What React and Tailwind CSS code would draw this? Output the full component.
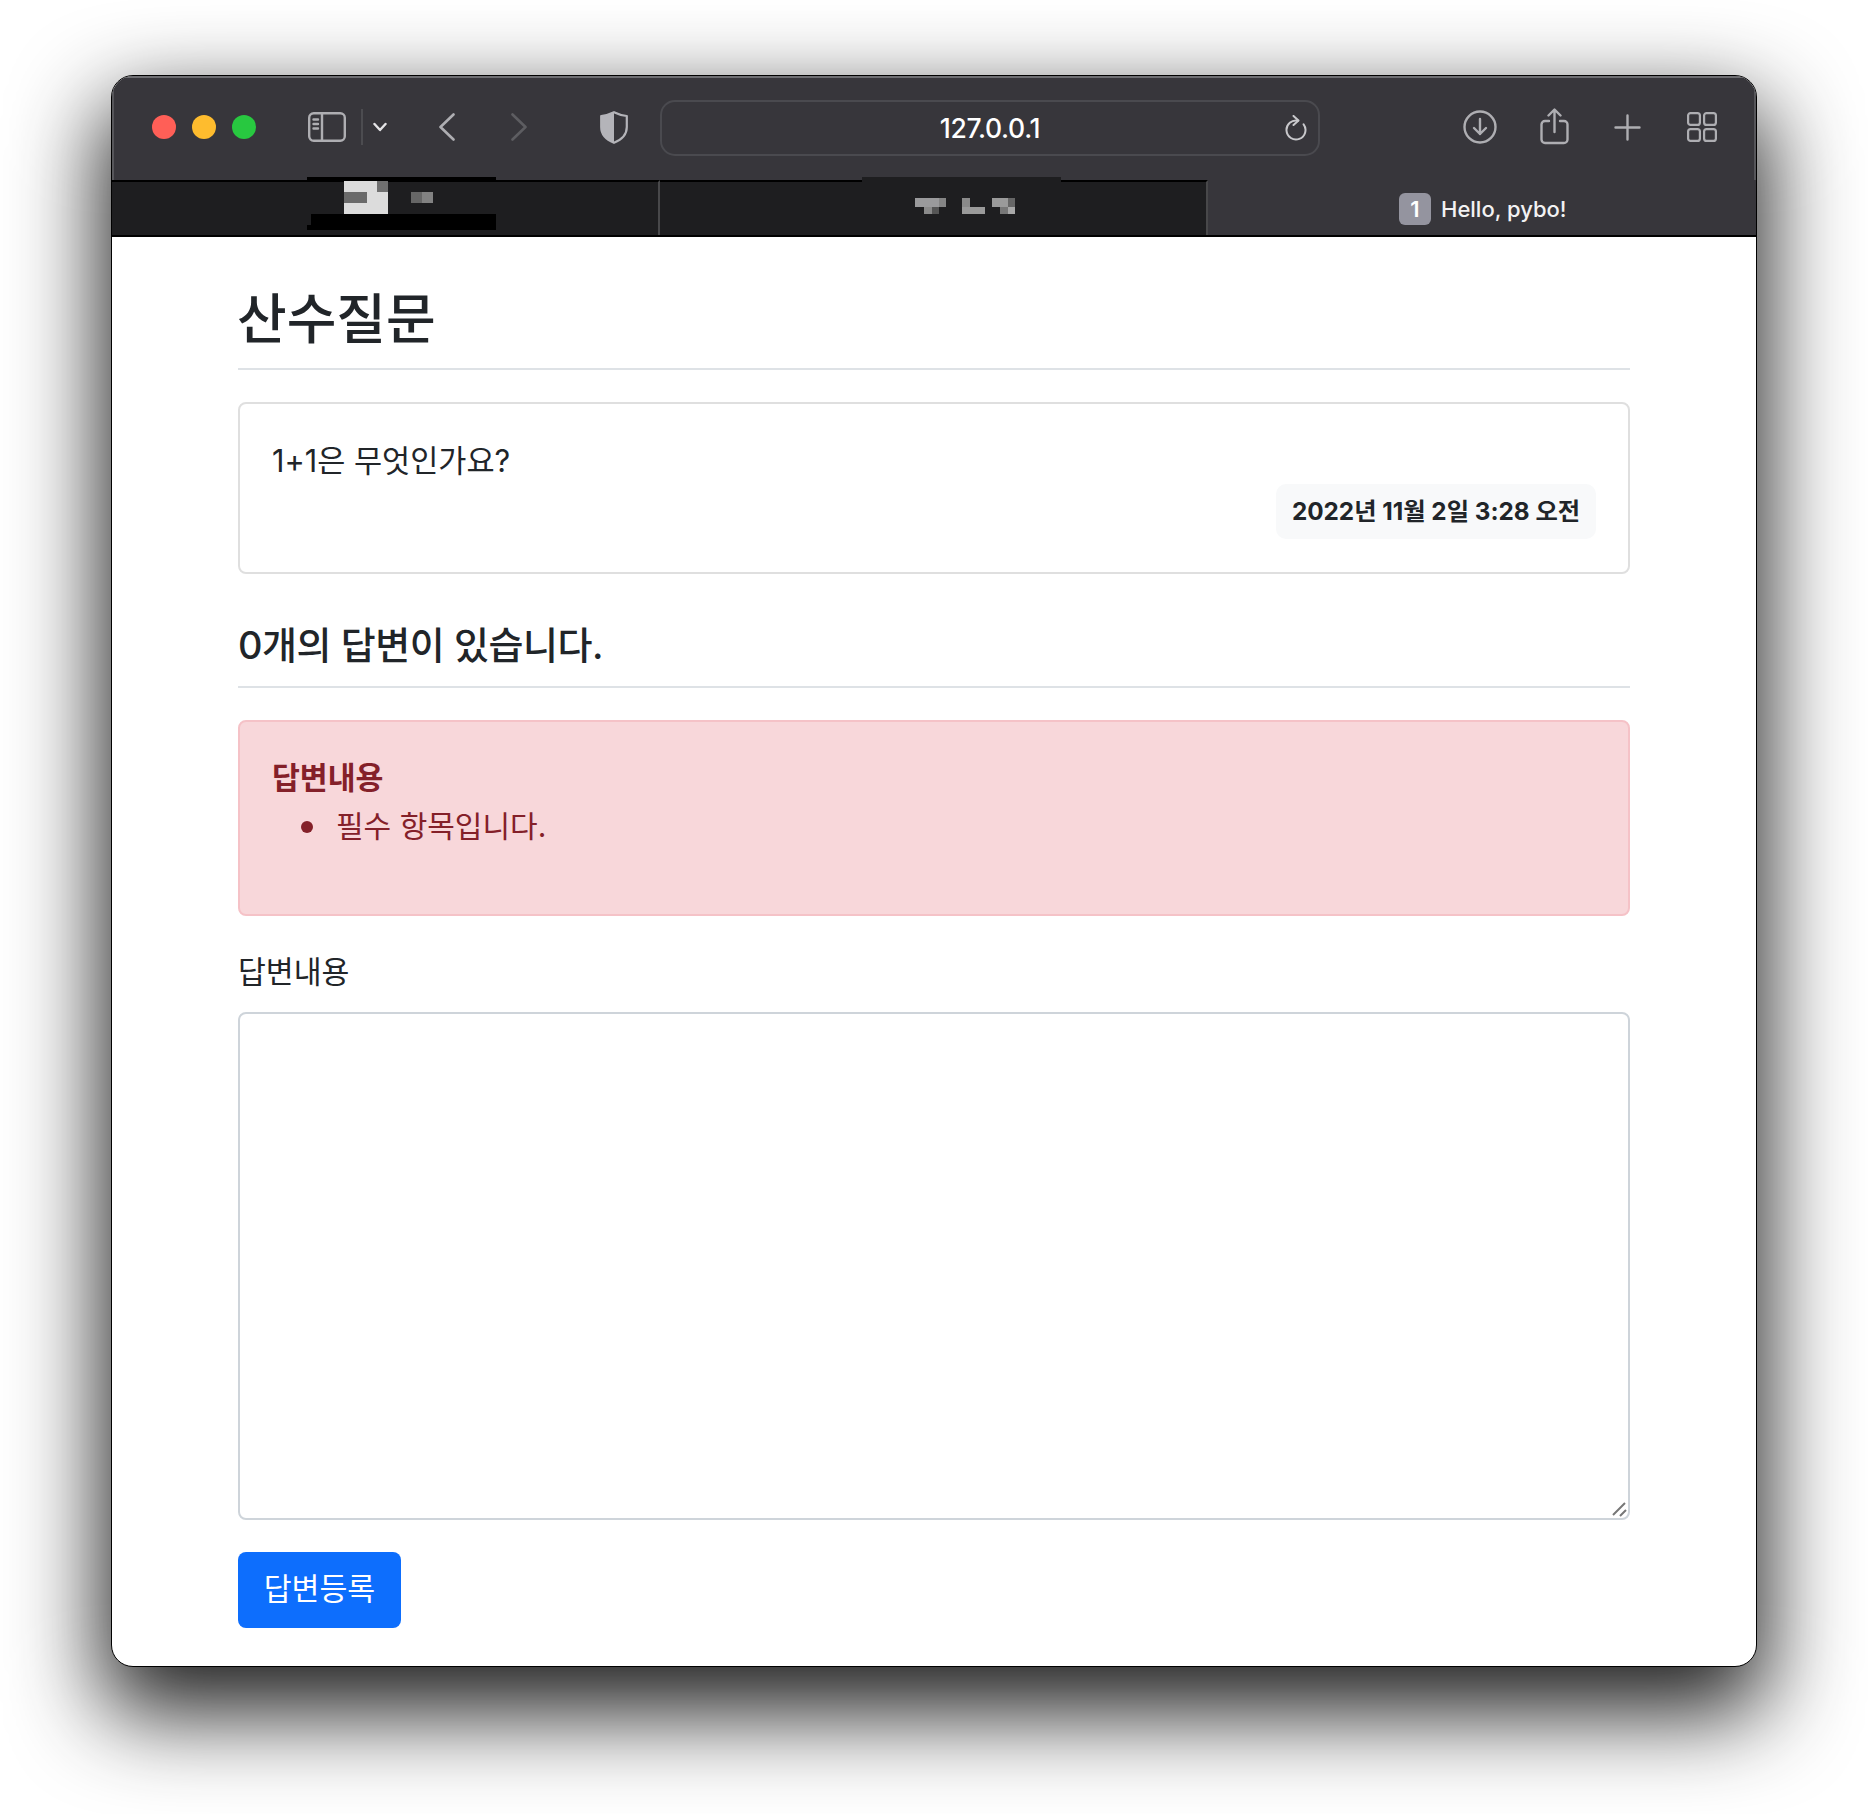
import React from "react";

function Mosaic1() {
  return (
    <svg width="190" height="53" viewBox="0 0 190 53" className="absolute left-[195px] top-[-5px]" shapeRendering="crispEdges">
      <rect x="0" y="0" width="189" height="4" fill="#000" />
      <rect x="37" y="4" width="44" height="33" fill="#dcdcdc" />
      <rect x="70" y="4" width="11" height="11" fill="#707070" />
      <rect x="37" y="15" width="23" height="11" fill="#6a6a6a" />
      <rect x="104" y="15" width="11" height="11" fill="#666666" />
      <rect x="115" y="15" width="11" height="11" fill="#828282" />
      <rect x="4" y="37" width="185" height="16" fill="#000" />
      <rect x="0" y="48" width="4" height="5" fill="#000" />
    </svg>
  );
}

function Mosaic2() {
  return (
    <svg width="200" height="40" viewBox="0 0 200 40" className="absolute left-[202px] top-[-5px]" shapeRendering="crispEdges">
      <rect x="0" y="0" width="199" height="5" fill="#1e1e20" />
      <rect x="53" y="21" width="24" height="9" fill="#9a9a9c" />
      <rect x="77" y="21" width="7" height="9" fill="#858585" />
      <rect x="62" y="30" width="8" height="7" fill="#8a8a8a" />
      <rect x="70" y="30" width="7" height="7" fill="#555555" />
      <rect x="100" y="21" width="8" height="9" fill="#8a8a8a" />
      <rect x="100" y="30" width="23" height="7" fill="#9a9a9a" />
      <rect x="130" y="21" width="16" height="9" fill="#9a9a9a" />
      <rect x="146" y="21" width="7" height="9" fill="#666666" />
      <rect x="138" y="30" width="8" height="7" fill="#777777" />
      <rect x="146" y="30" width="7" height="7" fill="#a8a8a8" />
    </svg>
  );
}

function Toolbar() {
  return (
    <div className="flex h-[104px] items-center bg-[#37363b] pb-[2px] pl-[40px] shadow-[inset_0_2px_0_#6e6e72,inset_2px_0_0_#56565a,inset_-2px_0_0_#56565a]">
      <span className="h-[24px] w-[24px] rounded-full bg-[#ff5f57]" />
      <span className="ml-[16px] h-[24px] w-[24px] rounded-full bg-[#febc2e]" />
      <span className="ml-[16px] h-[24px] w-[24px] rounded-full bg-[#28c840]" />

      <svg className="ml-[52px]" width="38" height="30" viewBox="0 0 38 30" fill="none" stroke="#aeaeb2" strokeWidth="2.4">
        <rect x="1.2" y="1.2" width="35.6" height="27.6" rx="4.5" />
        <path d="M14 1.2v27.6" />
        <path d="M5.5 7.5h4.5M5.5 12h4.5M5.5 16.5h4.5" strokeLinecap="round" />
      </svg>
      <span className="ml-[15px] h-[36px] w-[2px] bg-[#4c4c50]" />
      <svg className="ml-[10px]" width="14" height="10" viewBox="0 0 14 10" fill="none" stroke="#e4e4e6" strokeWidth="2.4" strokeLinecap="round" strokeLinejoin="round">
        <path d="M1.5 2L7 8l5.5-6" />
      </svg>
      <svg className="ml-[52px]" width="16" height="28" viewBox="0 0 16 28" fill="none" stroke="#aeaeb2" strokeWidth="2.6" strokeLinecap="round" strokeLinejoin="round">
        <path d="M14.5 1.5L1.5 14l13 12.5" />
      </svg>
      <svg className="ml-[56px]" width="16" height="28" viewBox="0 0 16 28" fill="none" stroke="#5d5d61" strokeWidth="2.6" strokeLinecap="round" strokeLinejoin="round">
        <path d="M1.5 1.5L14.5 14l-13 12.5" />
      </svg>
      <svg className="ml-[73px]" width="28" height="33" viewBox="0 0 28 33" fill="none">
        <path d="M14 1.2C10 3.2 6 4.4 1.2 5v11c0 8 5.4 12.8 12.8 15.8C21.4 28.8 26.8 24 26.8 16V5C22 4.4 18 3.2 14 1.2z" stroke="#b4b4b9" strokeWidth="2.2" strokeLinejoin="round" />
        <path d="M14 1.2C10 3.2 6 4.4 1.2 5v11c0 8 5.4 12.8 12.8 15.8z" fill="#b4b4b9" />
      </svg>

      <div className="relative ml-[32px] mt-[2px] flex h-[56px] w-[660px] items-center justify-center rounded-[15px] border-2 border-[#4a4a4f] pt-[2px] text-[26.5px] font-medium tracking-[-0.3px] text-white">
        127.0.0.1
        <svg className="absolute right-[11px] top-[13px]" width="22" height="26" viewBox="0 0 22 26" fill="none" stroke="#c8c8cb" strokeWidth="2" strokeLinecap="round" strokeLinejoin="round">
          <path d="M13 5.7a9.5 9.5 0 1 0 5.6 3.6" />
          <path d="M8.5 1L13.5 5.5 8.5 10" />
        </svg>
      </div>

      <svg className="ml-[143px]" width="34" height="34" viewBox="0 0 34 34" fill="none" stroke="#aeaeb2" strokeWidth="2.4" strokeLinecap="round" strokeLinejoin="round">
        <circle cx="17" cy="17" r="15.5" />
        <path d="M17 9v15M11 18l6 6 6-6" />
      </svg>
      <svg className="ml-[43px] mt-[-2px]" width="29" height="37" viewBox="0 0 29 37" fill="none" stroke="#aeaeb2" strokeWidth="2.4" strokeLinecap="round" strokeLinejoin="round">
        <path d="M9 13H5a3.5 3.5 0 0 0-3.5 3.5v15A3.5 3.5 0 0 0 5 35h19a3.5 3.5 0 0 0 3.5-3.5v-15A3.5 3.5 0 0 0 24 13h-4" />
        <path d="M14.5 24V2M8.5 7.5l6-6 6 6" />
      </svg>
      <svg className="ml-[45px]" width="27" height="27" viewBox="0 0 27 27" fill="none" stroke="#aeaeb2" strokeWidth="2.4" strokeLinecap="round">
        <path d="M13.5 1.5v24M1.5 13.5h24" />
      </svg>
      <svg className="ml-[46px]" width="30" height="30" viewBox="0 0 30 30" fill="none" stroke="#aeaeb2" strokeWidth="2.2">
        <rect x="1.1" y="1.1" width="11.8" height="11.8" rx="2.5" />
        <rect x="17.1" y="1.1" width="11.8" height="11.8" rx="2.5" />
        <rect x="1.1" y="17.1" width="11.8" height="11.8" rx="2.5" />
        <rect x="17.1" y="17.1" width="11.8" height="11.8" rx="2.5" />
      </svg>
    </div>
  );
}

function TabBar() {
  return (
    <div className="flex h-[57px] border-b-2 border-black">
      <div className="relative w-[548px] border-t-2 border-r-2 border-black border-r-[#48484a] bg-[#1e1e20]">
        <Mosaic1 />
      </div>
      <div className="relative w-[548px] border-t-2 border-r-2 border-black border-r-[#48484a] bg-[#1e1e20]">
        <Mosaic2 />
      </div>
      <div className="flex flex-1 items-center bg-[#37363b] pl-[191px] pt-[3px]">
        <span className="flex h-[32px] w-[32px] items-center justify-center rounded-[6px] bg-[#94949f] text-[22px] font-semibold text-white">1</span>
        <span className="ml-[10px] text-[22px] font-medium text-[#f2f2f3]">Hello, pybo!</span>
      </div>
    </div>
  );
}

export default function App() {
  return (
    <div lang="ko" className="h-[1814px] w-[1868px] overflow-hidden bg-white pl-[111px] pt-[75px] font-['Inter','Noto_Sans_CJK_KR',sans-serif]">
      <div className="h-[1592px] w-[1646px] overflow-hidden rounded-[22px] border border-black bg-white shadow-[0_38px_90px_8px_rgba(0,0,0,0.88)]">
        <Toolbar />
        <TabBar />

        <div className="pl-[126px] pr-[126px] text-[#212529]">
          <h2 className="h-[133px] border-b-2 border-[#dee2e6] pt-[51px] text-[54px] font-medium leading-[64px]">
            <span className="-ml-[1px] block">산수질문</span>
          </h2>

          <div className="mt-[32px] h-[172px] rounded-[8px] border-2 border-[#dfdfdf] p-[32px]">
            <p className="pt-[1px] text-[30.6px] leading-[47px]">1+1은 무엇인가요?</p>
            <div className="flex justify-end">
              <span className="flex h-[55px] w-[320px] items-center justify-center rounded-[10px] bg-[#f8f9fa] text-[24.3px] font-bold">2022년 11월 2일 3:28 오전</span>
            </div>
          </div>

          <h5 className="h-[114px] border-b-2 border-[#dee2e6] pt-[45px] text-[38px] font-medium leading-[52px] tracking-[-0.45px]">0개의 답변이 있습니다.</h5>

          <div className="mt-[32px] h-[196px] rounded-[8px] border-2 border-[#f5c2c7] bg-[#f8d7da] p-[32px] text-[#842029]">
            <strong className="block pt-[1px] text-[30.3px] font-bold leading-[47px]">답변내용</strong>
            <ul className="pl-[29px]">
              <li className="flex items-center pt-[1px] text-[30px] leading-[47px]">
                <span className="mr-[23px] h-[12px] w-[12px] rounded-full bg-[#842029]" />
                필수 항목입니다.
              </li>
            </ul>
          </div>

          <label className="mt-[32px] block pt-[1px] text-[30.3px] leading-[47px]">답변내용</label>
          <div className="relative mt-[16px]">
            <textarea className="block h-[508px] w-full resize-none rounded-[8px] border-2 border-[#ced4da] bg-white" />
            <svg className="pointer-events-none absolute bottom-[3px] right-[3px]" width="16" height="16" viewBox="0 0 16 16" fill="none" stroke="#777777" strokeWidth="2">
              <path d="M2 14L14 2M9 15l6-6" />
            </svg>
          </div>

          <button className="mt-[32px] h-[76px] w-[163px] rounded-[8px] bg-[#0d6efd] text-[30.3px] text-white">답변등록</button>
        </div>
      </div>
    </div>
  );
}
